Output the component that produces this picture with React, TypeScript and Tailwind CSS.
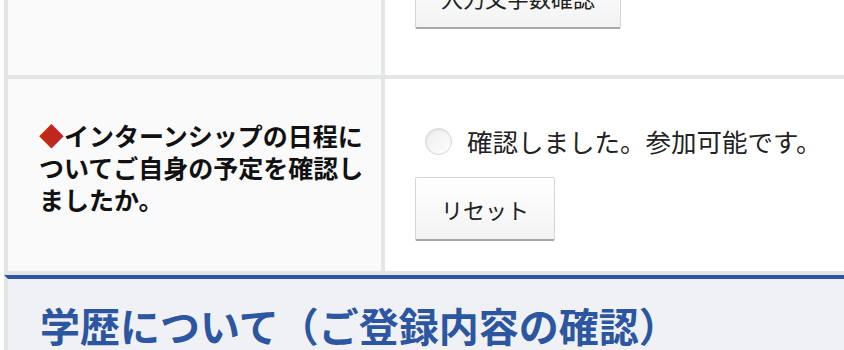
export default function App() {
  return (
    <div className="w-[844px] h-[350px] overflow-hidden bg-white pl-[4px] font-[Noto_Sans_CJK_JP,sans-serif] text-[#111]">
      {/* previous row (cut off at top) */}
      <div className="flex h-[79px] border-l-4 border-b-4 border-[#e4e5e7]">
        <div className="w-[377px] shrink-0 bg-[#fafafa] border-r-4 border-[#e4e5e7]" />
        <div className="flex-1 flex flex-col justify-end pb-[46px] pl-[30px] overflow-hidden">
          <button className="shrink-0 self-start h-[64px] px-[25px] text-[22px] leading-[32px] text-[#222] rounded-[2px] border border-[#d4d4d4] border-b-2 border-b-[#a8a8a8] bg-gradient-to-b from-white to-[#f3f3f3]">
            入力文字数確認
          </button>
        </div>
      </div>

      {/* internship schedule row */}
      <div className="flex h-[196px] border-l-4 border-b-4 border-[#e4e5e7]">
        <div className="w-[377px] shrink-0 bg-[#fafafa] border-r-4 border-[#e4e5e7] pt-[40px] pl-[31px] pr-[8px]">
          <p className="text-[25px] leading-[32px] font-bold">
            <span className="text-[#c0281c]">◆</span>インターンシップの日程についてご自身の予定を確認しましたか。
          </p>
        </div>
        <div className="flex-1 pt-[46px] pl-[30px]">
          <label className="flex items-center gap-[15px] pl-[10px]">
            <span className="w-[27px] h-[27px] rounded-full border border-[#d6d6d6] bg-gradient-to-br from-[#ececec] to-white shadow-[inset_0_1px_2px_rgba(0,0,0,0.08)]" />
            <span className="text-[25.5px] leading-[32px] text-[#222]">確認しました。参加可能です。</span>
          </label>
          <button className="mt-[20px] h-[64px] px-[25px] text-[22px] leading-[32px] text-[#222] rounded-[2px] border border-[#d4d4d4] border-b-2 border-b-[#a8a8a8] bg-gradient-to-b from-white to-[#f3f3f3]">
            リセット
          </button>
        </div>
      </div>

      {/* section heading */}
      <div className="h-[80px] border-l-4 border-t-4 border-l-[#e4e5e7] border-t-[#2c56a0] bg-[#eff1f4] pl-[32px] pt-[22px]">
        <h2 className="text-[40px] leading-[48px] font-bold text-[#2c56a0]">
          学歴について（ご登録内容の確認）
        </h2>
      </div>
    </div>
  );
}
